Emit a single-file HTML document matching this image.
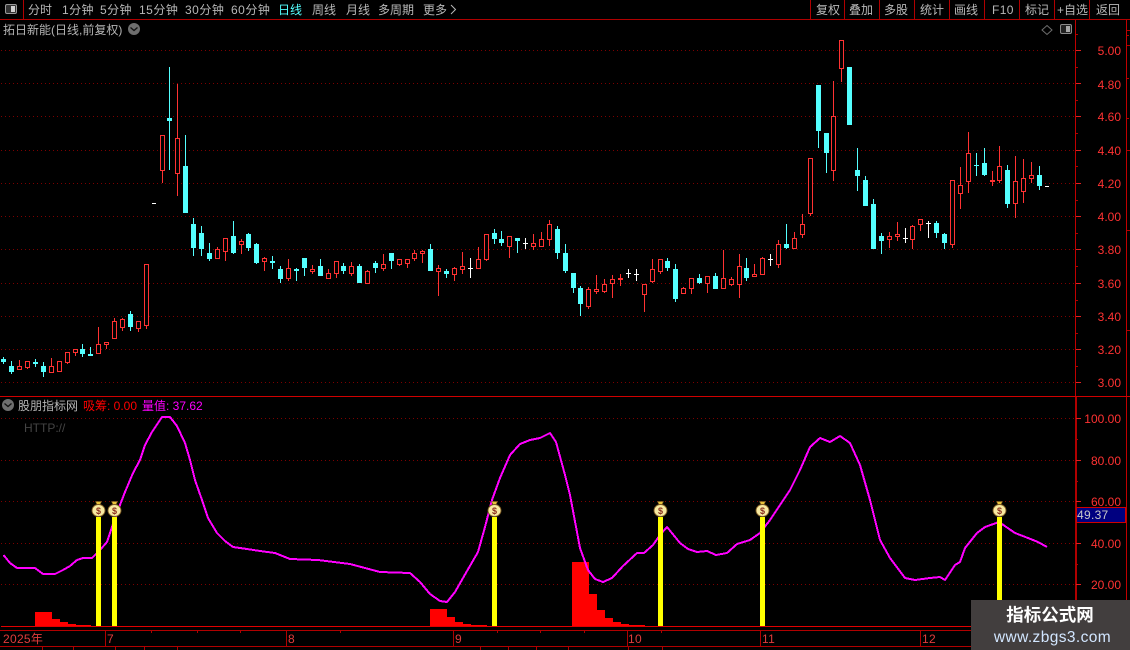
<!DOCTYPE html>
<html lang="zh"><head><meta charset="utf-8"><title>拓日新能</title>
<style>
html,body{margin:0;padding:0;background:#000;width:1130px;height:650px;overflow:hidden}
svg{display:block;position:absolute;left:0;top:0}
text{font-family:"Liberation Sans","WenQuanYi Zen Hei","Noto Sans CJK SC",sans-serif;font-size:12px}
.tb text{fill:#b8b8b8}
.ax text{fill:#ff3232;text-anchor:end}
.dt text{fill:#e03c3c;font-size:12px;letter-spacing:.3px}
.c{shape-rendering:crispEdges}
</style></head><body>
<svg width="1130" height="650" viewBox="0 0 1130 650">
<defs>
<g id="bag">
<path d="M-3 -8.5h6l-1.600 3.200h-2.800z" fill="#e8c23a" stroke="#7a5a20" stroke-width=".6"/>
<ellipse cx="0" cy="0.500" rx="6.500" ry="6" fill="#f7e9a0" stroke="#7d5a22" stroke-width=".9"/>
<text x="0" y="4" text-anchor="middle" style="font-size:9px;font-weight:bold;fill:#8a2f1e">$</text>
</g>
</defs>

<!-- grid -->
<g stroke="#7d0000" stroke-width="1" stroke-dasharray="1 3" class="c" fill="none">
<path d="M1 50.500H1075M1 83.500H1075M1 116.500H1075M1 150.500H1075M1 183.500H1075M1 216.500H1075M1 249.500H1075M1 283.500H1075M1 316.500H1075M1 349.500H1075M1 382.500H1075"/>
<path d="M1 418.500H1075M1 460.500H1075M1 501.500H1075M1 543.500H1075M1 584.500H1075"/>
</g>

<!-- red candles -->
<path class="c" fill="#000" stroke="#ff3232" stroke-width="1" d="M19.5 360V366M17.5 366.5h4v3h-4zM25.5 361.5h4v6h-4zM27.5 368V369M51.5 358V366M49.5 366.5h4v6h-4zM57.5 361.5h4v10h-4zM65.5 352.5h4v10h-4zM67.5 363V364M73.5 349.5h4v3h-4zM75.5 353V356M98.5 327V344M96.5 344.5h4v9h-4zM104.5 342.5h4v2h-4zM106.5 345V349M114.5 318V321M112.5 321.5h4v17h-4zM122.5 318V319M120.5 319.5h4v8h-4zM122.5 328V331M136.5 321.5h4v7h-4zM138.5 329V332M144.5 264.5h4v61h-4zM146.5 326V329M160.5 135.5h4v35h-4zM162.5 171V183M177.5 84V138M175.5 138.5h4v35h-4zM177.5 174V196M217.5 247V249M215.5 249.5h4v9h-4zM223.5 238.5h4v13h-4zM225.5 252V261M241.5 239V241M239.5 241.5h4v3h-4zM241.5 245V254M264.5 257V258M262.5 258.5h4v3h-4zM264.5 262V271M288.5 259V268M286.5 268.5h4v10h-4zM288.5 279V281M312.5 265V269M310.5 269.5h4v2h-4zM312.5 272V274M328.5 269V273M326.5 273.5h4v5h-4zM334.5 261.5h4v12h-4zM336.5 274V278M351.5 262V266M349.5 266.5h4v7h-4zM351.5 274V276M367.5 270V271M365.5 271.5h4v12h-4zM383.5 254V264M381.5 264.5h4v4h-4zM383.5 269V271M397.5 259.5h4v5h-4zM399.5 265V266M405.5 259.5h4v4h-4zM407.5 264V268M414.5 250V253M412.5 253.5h4v5h-4zM414.5 259V261M422.5 250V251M420.5 251.5h4v2h-4zM422.5 254V263M438.5 265V268M436.5 268.5h4v3h-4zM438.5 272V296M454.5 267V268M452.5 268.5h4v6h-4zM454.5 275V281M462.5 252V266M460.5 266.5h4v3h-4zM462.5 270V274M478.5 247V259M476.5 259.5h4v9h-4zM484.5 234.5h4v25h-4zM486.5 260V261M507.5 236.5h4v10h-4zM509.5 247V258M533.5 234V243M531.5 243.5h4v3h-4zM533.5 247V250M541.5 232V239M539.5 239.5h4v7h-4zM549.5 220V224M547.5 224.5h4v15h-4zM549.5 240V246M588.5 287V289M586.5 289.5h4v17h-4zM588.5 307V309M596.5 275V289M594.5 289.5h4v2h-4zM596.5 292V294M604.5 279V284M602.5 284.5h4v7h-4zM604.5 292V293M612.5 275V279M610.5 279.5h4v4h-4zM612.5 284V298M642.5 284.5h4v10h-4zM644.5 295V312M652.5 259V269M650.5 269.5h4v12h-4zM652.5 282V283M658.5 259.5h4v12h-4zM660.5 272V274M683.5 287V288M681.5 288.5h4v5h-4zM689.5 278.5h4v10h-4zM691.5 289V294M705.5 276.5h4v7h-4zM707.5 284V293M723.5 250V278M721.5 278.5h4v10h-4zM731.5 277V279M729.5 279.5h4v5h-4zM731.5 285V286M739.5 254V266M737.5 266.5h4v18h-4zM739.5 285V298M754.5 264V274M752.5 274.5h4v2h-4zM762.5 257V258M760.5 258.5h4v16h-4zM778.5 240V244M776.5 244.5h4v20h-4zM778.5 265V268M794.5 232V238M792.5 238.5h4v10h-4zM802.5 214V224M800.5 224.5h4v10h-4zM802.5 235V238M808.5 158.5h4v55h-4zM810.5 214V216M833.5 81V116M831.5 116.5h4v54h-4zM833.5 171V181M839.5 40.5h4v28h-4zM841.5 69V82M889.5 232V236M887.5 236.5h4v3h-4zM889.5 240V248M897.5 222V234M895.5 234.5h4v2h-4zM897.5 237V241M912.5 225V226M910.5 226.5h4v13h-4zM912.5 240V249M918.5 219.5h4v5h-4zM920.5 225V231M950.5 180.5h4v64h-4zM952.5 245V248M960.5 167V185M958.5 185.5h4v8h-4zM960.5 194V209M968.5 132V153M966.5 153.5h4v28h-4zM968.5 182V193M999.5 146V166M997.5 166.5h4v14h-4zM999.5 181V183M1015.5 156V181M1013.5 181.5h4v22h-4zM1015.5 204V218M1023.5 159V178M1021.5 178.5h4v13h-4zM1023.5 192V203M1031.5 162V175M1029.5 175.5h4v3h-4zM1031.5 179V183"/>
<path class="c" fill="#ff3232" stroke="#ff3232" d="M620.5 274V286M618.5 278.5h4v1h-4zM992.5 171V186M990.5 180.5h4v1h-4z"/>

<!-- cyan candles -->
<path class="c" fill="#54ffff" stroke="#54ffff" stroke-width="1" d="M3.5 357V364M1.5 359.5h4v2h-4zM11.5 361V374M9.5 366.5h4v5h-4zM35.5 359V367M33.5 362.5h4v1h-4zM43.5 362V377M41.5 366.5h4v5h-4zM82.5 344V357M80.5 349.5h4v4h-4zM90.5 347V356M88.5 354.5h4v1h-4zM130.5 311V331M128.5 314.5h4v12h-4zM169.5 67V170M167.5 118.5h4v2h-4zM185.5 135V166M183.5 166.5h4v46h-4zM193.5 218V256M191.5 224.5h4v23h-4zM201.5 226V256M199.5 233.5h4v15h-4zM209.5 243V261M207.5 253.5h4v5h-4zM233.5 221V254M231.5 236.5h4v16h-4zM248.5 233V251M246.5 234.5h4v13h-4zM256.5 243V264M254.5 244.5h4v18h-4zM272.5 256V269M270.5 261.5h4v1h-4zM280.5 266V283M278.5 269.5h4v9h-4zM296.5 268V281M294.5 269.5h4v1h-4zM304.5 258V276M302.5 258.5h4v9h-4zM320.5 259V276M318.5 266.5h4v9h-4zM343.5 263V274M341.5 266.5h4v4h-4zM359.5 264V283M357.5 266.5h4v16h-4zM375.5 261V273M373.5 263.5h4v4h-4zM391.5 253V269M389.5 253.5h4v7h-4zM430.5 244V271M428.5 249.5h4v21h-4zM446.5 269V278M444.5 271.5h4v2h-4zM494.5 229V244M492.5 233.5h4v5h-4zM501.5 231V246M499.5 239.5h4v3h-4zM517.5 238V253M515.5 238.5h4v2h-4zM557.5 226V259M555.5 229.5h4v23h-4zM565.5 244V273M563.5 253.5h4v17h-4zM573.5 273V293M571.5 273.5h4v14h-4zM580.5 286V316M578.5 288.5h4v15h-4zM667.5 258V271M665.5 261.5h4v6h-4zM675.5 264V302M673.5 269.5h4v29h-4zM699.5 274V284M697.5 278.5h4v4h-4zM715.5 273V289M713.5 276.5h4v12h-4zM746.5 258V281M744.5 268.5h4v9h-4zM786.5 224V249M784.5 244.5h4v3h-4zM818.5 85V148M816.5 85.5h4v45h-4zM826.5 133V173M824.5 133.5h4v19h-4zM849.5 67V125M847.5 67.5h4v57h-4zM857.5 148V191M855.5 170.5h4v5h-4zM865.5 176V206M863.5 180.5h4v25h-4zM873.5 199V249M871.5 204.5h4v44h-4zM881.5 233V254M879.5 236.5h4v4h-4zM936.5 221V238M934.5 223.5h4v9h-4zM944.5 233V249M942.5 234.5h4v8h-4zM976.5 153V176M974 165.5h5M984.5 148V176M982.5 163.5h4v11h-4zM1007.5 165V208M1005.5 170.5h4v33h-4zM1039.5 166V190M1037.5 175.5h4v10h-4z"/>

<!-- white doji -->
<path class="c" fill="none" stroke="#fff" stroke-width="1" d="M152 203.5h4M470.5 258V278M468 268.5h5M525.5 238V249M523 243.5h5M628.5 269V278M626 273.5h5M636.5 269V281M634 274.5h5M770.5 254V266M768 259.5h5M905.5 228V243M903 238.5h5M928.5 221V238M926 223.5h5M1045 186.5h4"/>

<!-- volume histogram -->
<path class="c" fill="#f00" d="M35 612h17v15H35zM52 619h8v8h-8zM60 622h8v5h-8zM68 624h8v3h-8zM76 625h15v2H76zM430 609h17v18h-17zM447 617h8v10h-8zM455 622h8v5h-8zM463 624h8v3h-8zM471 625h16v2h-16zM572 562h17v65h-17zM589 594h8v33h-8zM597 610h8v17h-8zM605 618h8v9h-8zM613 622h8v5h-8zM621 624h8v3h-8zM629 625h16v2h-16z"/>

<!-- magenta curve -->
<polyline fill="none" stroke="#ff00ff" stroke-width="2" stroke-linejoin="round" class="c" points="3.5,555 10,563 17,568 35,568 43,574 55,574 63,570 70,566 77,560 83,558 92,558 100,550 107,542 112,527 120,505 125,492 133,473 140,460 145,445 152,432 162,417 170,417 177,426 185,443 190,460 195,480 202,500 208,518 217,533 225,541 233,547 247,549 260,551 275,553 290,559 318,560 350,564 380,572 410,573 420,582 430,594 440,601 447,602 455,592 463,578 478,552 485,527 492,500 500,478 510,455 520,444 530,440 540,438 550,433 556,442 565,475 570,495 580,548 588,570 595,579 603,582 612,578 623,566 637,553 644,553 653,545 660,535 667,527 680,543 688,549 697,552 707,551 716,555 727,553 737,544 750,540 760,533 770,520 780,505 790,490 800,470 810,447 820,438 830,442 840,436 850,443 860,465 870,500 880,540 890,558 905,578 915,580 930,578 940,577 945,580 955,565 960,562 965,548 977,533 985,527 999,522 1015,533 1028,538 1038,542 1047,547"/>

<!-- yellow bars -->
<path class="c" fill="#ff0" d="M96 517h5v110h-5zM112 517h5v110h-5zM492 517h5v110h-5zM658 517h5v110h-5zM760 517h5v110h-5zM997 517h5v110h-5z"/>
<use href="#bag" x="98.500" y="510"/><use href="#bag" x="114.500" y="510"/><use href="#bag" x="494.500" y="510"/><use href="#bag" x="660.500" y="510"/><use href="#bag" x="762.500" y="510"/><use href="#bag" x="999.500" y="510"/>

<!-- frame lines -->
<g class="c" fill="none">
<path stroke="#b00000" d="M0 19.500H1130M23.500 0V19M810.500 0V19M844.500 0V19M879.500 0V19M914.500 0V19M949.500 0V19M984.500 0V19M1019.500 0V19M1054.500 0V19M1089.500 0V19"/>
<path stroke="#c00000" d="M1075.500 20V397"/>
<path stroke="#b00000" stroke-width="2" d="M1076 397V630"/>
<path stroke="#c00000" d="M1126.500 20V630"/>
<path stroke="#d00000" stroke-width="1" d="M0 396.500H1130"/>
<path stroke="#e00000" d="M1 626.500H1076"/>
<path stroke="#b00000" d="M0 630.500H1130M0 646.500H1130M105.500 630V646M453.500 630V646M627.500 630V646M760.500 630V646M920.500 630V646M151.500 630V633M197.500 630V633M240.500 630V633M286.500 630V646M340.500 630V633M497.500 630V633M540.500 630V633M584.500 630V633M661.500 630V633M42.500 646V650M73.500 646V650M115.500 646V650M144.500 646V650M177.500 646V650M480.500 646V650M508.500 646V650M536.500 646V650M568.500 646V650M628.500 646V650M662.500 646V650"/>
<!-- axis ticks -->
<path stroke="#e02020" d="M1076 50.500h5M1076 83.500h5M1076 116.500h5M1076 150.500h5M1076 183.500h5M1076 216.500h5M1076 249.500h5M1076 283.500h5M1076 316.500h5M1076 349.500h5M1076 382.500h5M1076 418.500h5M1076 460.500h5M1076 501.500h5M1076 543.500h5M1076 584.500h5"/>
<path stroke="#b00000" d="M1076 34.500h2M1076 67.500h2M1076 100.500h2M1076 133.500h2M1076 166.500h2M1076 200.500h2M1076 233.500h2M1076 266.500h2M1076 300.500h2M1076 333.500h2M1076 366.500h2M1076 439.500h2M1076 481.500h2M1076 522.500h2M1076 564.500h2M1076 605.500h2M1127 45.500h3M1127 30.500h3M1127 35.500h2M1127 78.500h2M1127 118.500h2M1127 150.500h3M1127 230.500h3M1127 330.500h3"/>
</g>

<!-- top-left icon -->
<rect x="5.500" y="4.500" width="11" height="9" rx="1.500" fill="#333" stroke="#9a9a9a"/>
<rect x="11" y="6" width="4" height="6" fill="#d0d0d0" class="c"/>

<!-- toolbar text -->
<g class="tb">
<text x="28" y="14">分时</text>
<text x="62" y="14" letter-spacing=".4">1分钟</text>
<text x="100" y="14" letter-spacing=".4">5分钟</text>
<text x="139" y="14" letter-spacing=".5">15分钟</text>
<text x="185" y="14" letter-spacing=".5">30分钟</text>
<text x="231" y="14" letter-spacing=".5">60分钟</text>
<text x="278" y="14" style="fill:#54ffff">日线</text>
<text x="312" y="14">周线</text>
<text x="346" y="14">月线</text>
<text x="378" y="14">多周期</text>
<text x="423" y="14">更多</text>
<path d="M451 5l4.500 4.500L451 14" fill="none" stroke="#b8b8b8" stroke-width="1"/>
<text x="816" y="14">复权</text>
<text x="849" y="14">叠加</text>
<text x="884" y="14">多股</text>
<text x="920" y="14">统计</text>
<text x="954" y="14">画线</text>
<text x="992" y="14" letter-spacing=".4">F10</text>
<text x="1025" y="14">标记</text>
<text x="1057" y="14">+自选</text>
<text x="1096" y="14">返回</text>
</g>

<!-- title row -->
<text x="3" y="34" fill="#b4b4b4">拓日新能(日线,前复权)</text>
<circle cx="134" cy="29" r="6" fill="#6e6e6e"/>
<path d="M130.500 27.500l3.500 3 3.500-3" fill="none" stroke="#111" stroke-width="1.300"/>
<path d="M1047 25.500l5 4.500-5 4.500-5-4.500z" fill="none" stroke="#6e6e6e"/>
<rect x="1060.500" y="24.500" width="11" height="9" rx="1.500" fill="#222" stroke="#8a8a8a"/>
<rect x="1066" y="26" width="4" height="6" fill="#a8a8a8" class="c"/>

<!-- lower title -->
<circle cx="8" cy="405" r="6" fill="#6e6e6e"/>
<path d="M4.500 403.500l3.500 3 3.500-3" fill="none" stroke="#111" stroke-width="1.300"/>
<text x="18" y="410" fill="#b4b4b4">股朋指标网</text>
<text x="83" y="410" fill="#f00">吸筹: 0.00</text>
<text x="142" y="410" fill="#f0f">量值: 37.62</text>
<text x="24" y="432" fill="#444">HTTP://</text>

<!-- axis labels -->
<g class="ax">
<text x="1121" y="55">5.00</text><text x="1121" y="89">4.80</text><text x="1121" y="121">4.60</text><text x="1121" y="155">4.40</text><text x="1121" y="188">4.20</text><text x="1121" y="221">4.00</text><text x="1121" y="254">3.80</text><text x="1121" y="288">3.60</text><text x="1121" y="321">3.40</text><text x="1121" y="354">3.20</text><text x="1121" y="387">3.00</text>
<text x="1121" y="423">100.00</text><text x="1121" y="465">80.00</text><text x="1121" y="506">60.00</text><text x="1121" y="548">40.00</text><text x="1121" y="589">20.00</text>
</g>
<rect x="1076.500" y="507.500" width="49" height="15" fill="#000080" stroke="#d00000" class="c"/>
<text x="1077" y="519" fill="#c8c8c8" letter-spacing=".3">49.37</text>

<!-- date labels -->
<g class="dt">
<text x="3" y="643">2025年</text>
<text x="107" y="643">7</text>
<text x="288" y="643">8</text>
<text x="455" y="643">9</text>
<text x="628" y="643">10</text>
<text x="762" y="643">11</text>
<text x="922" y="643">12</text>
</g>

<!-- watermark -->
<rect x="971" y="600" width="159" height="50" fill="#423e3e"/>
<text x="1050" y="621" text-anchor="middle" fill="#fff" style="font-size:17.500px;font-weight:bold;font-family:'Liberation Sans','Noto Sans CJK SC',sans-serif">指标公式网</text>
<text x="1052.500" y="642" text-anchor="middle" fill="#d2e6ff" style="font-size:15.500px;letter-spacing:.4px">www.zbgs3.com</text>
</svg>
</body></html>
